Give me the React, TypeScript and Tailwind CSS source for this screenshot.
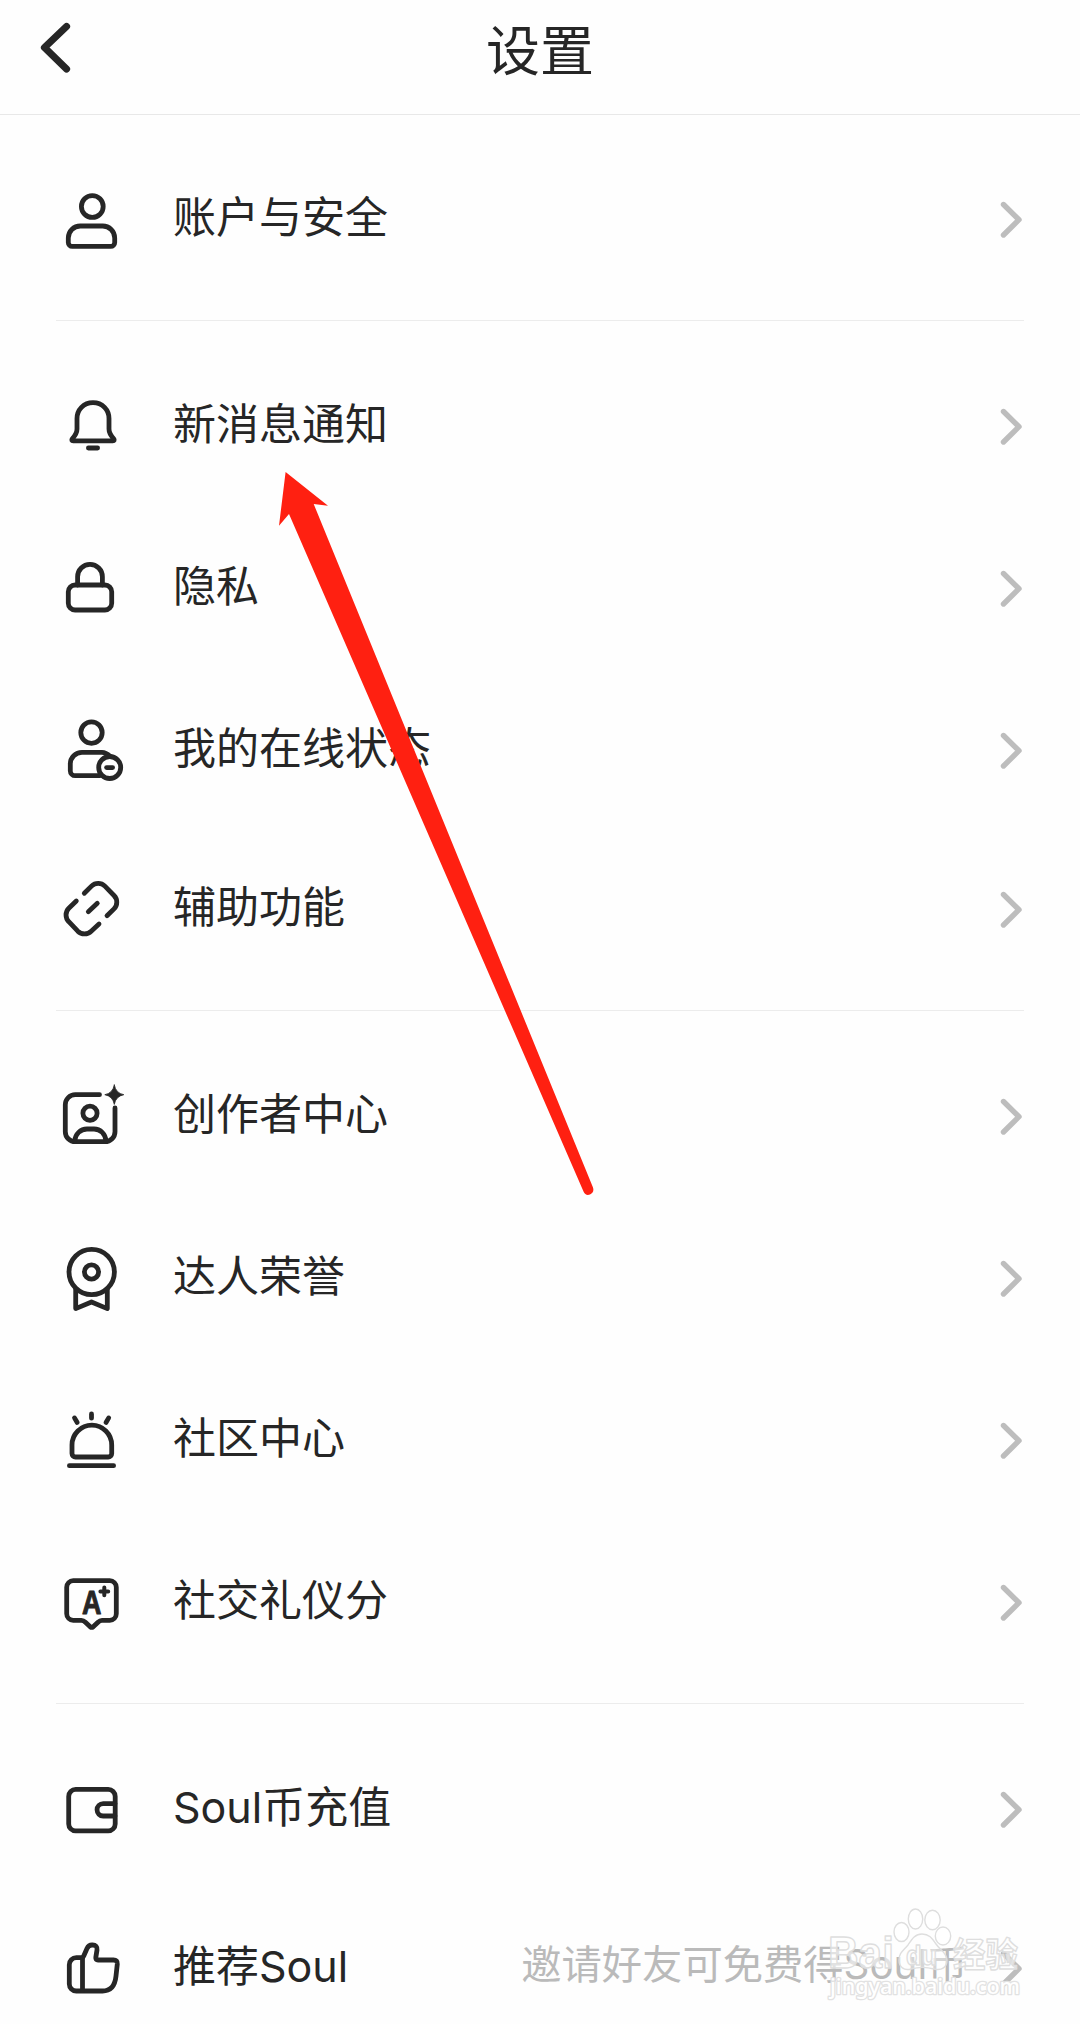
import type { ReactNode } from "react";

type Item = {
  label: string;
  icon: ReactNode;
  hint?: string;
  compact?: boolean;
};

function Icon({ children }: { children: ReactNode }) {
  return (
    <svg
      viewBox="0 0 72 72"
      className="size-[72px] shrink-0"
      fill="none"
      stroke="currentColor"
      strokeWidth={4.8}
      strokeLinecap="round"
      strokeLinejoin="round"
    >
      {children}
    </svg>
  );
}

const UserIcon = () => (
  <Icon>
    <circle cx="36.3" cy="22.5" r="10.9" />
    <path d="M24.3 42H46.7A12 12 0 0 1 58.7 54V58.4A4 4 0 0 1 54.7 62.4H16.3A4 4 0 0 1 12.3 58.4V54A12 12 0 0 1 24.3 42Z" />
  </Icon>
);

const BellIcon = () => (
  <Icon>
    <path d="M37 11.7C27.5 11.7 21 18.8 21 27.5V38C21 42 19 44.8 16.4 47.6C15.2 49 15.8 49.8 17.2 49.8H56.8C58.2 49.8 58.8 49 57.6 47.6C55 44.8 53 42 53 38V27.5C53 18.8 46.5 11.7 37 11.7Z" />
    <path d="M32.4 57H41.6" />
  </Icon>
);

const LockIcon = () => (
  <Icon>
    <rect x="12.3" y="32" width="43.4" height="25" rx="6.8" />
    <path d="M21.6 32V23.7A12.4 12.4 0 0 1 46.4 23.7V32" />
  </Icon>
);

const StatusIcon = () => (
  <Icon>
    <circle cx="35.5" cy="17.6" r="10.7" />
    <path d="M44 60.7H19.3A5 5 0 0 1 14.3 55.7V49A11.7 11.7 0 0 1 26 37.3H46Q50 37.3 54 41.2" />
    <circle cx="53.7" cy="52.5" r="11" />
    <path d="M50.6 52.6H56.6" />
  </Icon>
);

const LinkIcon = () => (
  <Icon>
    <path d="M28.3 19.3L35.5 12.1A9.5 9.5 0 0 1 48.9 12.1L58 21.5A9.5 9.5 0 0 1 58 34.9L51 41.7" />
    <path d="M20.3 27L12.8 34.3A9.5 9.5 0 0 0 12.8 47.7L21.8 57.2A9.5 9.5 0 0 0 35.2 57.2L43 50" />
    <path d="M32.3 37.7L41.3 29.3" />
  </Icon>
);

const CreatorIcon = () => (
  <Icon>
    <path d="M43.5 13.7H19.3A10 10 0 0 0 9.3 23.7V50.7A10 10 0 0 0 19.3 60.7H49A10 10 0 0 0 59 50.7V27" />
    <circle cx="34" cy="32.3" r="7.1" />
    <path d="M18.7 60C19.2 53 24.5 48 31 48H38C44.5 48 49.5 53 50 60" />
    <path
      d="M58.3 4Q59.8 12.2 67.8 13.7Q59.8 15.2 58.3 23.4Q56.8 15.2 48.8 13.7Q56.8 12.2 58.3 4Z"
      fill="currentColor"
      strokeWidth={0.8}
    />
  </Icon>
);

const MedalIcon = () => (
  <Icon>
    <circle cx="35.7" cy="29" r="22.7" />
    <circle cx="35.5" cy="29" r="7.1" />
    <path d="M19.7 46V65.6L35.5 59L51.3 65.6V46" />
  </Icon>
);

const SirenIcon = () => (
  <Icon>
    <path d="M35.5 9V13.2M18.5 12.9L21.2 17.5M52.7 12.9L50 17.5" />
    <path d="M16 40A19.8 19.8 0 0 1 55.7 40V48.5A3.5 3.5 0 0 1 52.2 52H19.5A3.5 3.5 0 0 1 16 48.5Z" />
    <path d="M13.4 60.7H57.6" />
  </Icon>
);

const ScoreIcon = () => (
  <Icon>
    <path d="M17.2 13.7H53.8A6.5 6.5 0 0 1 60.3 20.2V46.8A6.5 6.5 0 0 1 53.8 53.3H46C44 53.3 43.4 53.8 42 55.2L37.2 59.8Q35.7 61 34.2 59.8L29.4 55.2C28 53.8 27.4 53.3 25.4 53.3H17.2A6.5 6.5 0 0 1 10.7 46.8V20.2A6.5 6.5 0 0 1 17.2 13.7Z" />
    <text
      x="26"
      y="46.5"
      textLength="19.4"
      lengthAdjust="spacingAndGlyphs"
      className="font-['Liberation_Sans',sans-serif] text-[33px] font-bold"
      fill="currentColor"
      strokeWidth={1}
    >
      A
    </text>
    <path d="M44.4 24.4H52.2M48.3 20.5V28.3" strokeWidth={4} />
  </Icon>
);

const WalletIcon = () => (
  <Icon>
    <rect x="12.7" y="15.4" width="46.5" height="41.5" rx="7" />
    <path d="M59 29.7H47.2A6.15 6.15 0 0 0 47.2 42H59" />
  </Icon>
);

const ThumbIcon = () => (
  <Icon>
    <path d="M26.3 58H20.3A7 7 0 0 1 13.3 51V31.7A7 7 0 0 1 20.3 24.7H25.5Q27 24.7 27.6 23.2L31 15.5Q32.6 12 36 12H36.5Q41.5 12 41 17L39.8 24.5Q39.5 27 42 27H57.5Q61.6 27 61.3 31L60 43Q58.5 58 46.5 58Z" />
    <path d="M26.5 25V57.5" />
  </Icon>
);

const sections: { className: string; items: Item[] }[] = [
  {
    className: "pt-6 pb-[19px]",
    items: [{ label: "账户与安全", icon: <UserIcon /> }],
  },
  {
    className: "pt-[25px] pb-[22px]",
    items: [
      { label: "新消息通知", icon: <BellIcon /> },
      { label: "隐私", icon: <LockIcon /> },
      { label: "我的在线状态", icon: <StatusIcon /> },
      { label: "辅助功能", icon: <LinkIcon />, compact: true },
    ],
  },
  {
    className: "pt-[25px] pb-[19px]",
    items: [
      { label: "创作者中心", icon: <CreatorIcon /> },
      { label: "达人荣誉", icon: <MedalIcon /> },
      { label: "社区中心", icon: <SirenIcon /> },
      { label: "社交礼仪分", icon: <ScoreIcon /> },
    ],
  },
  {
    className: "pt-[25px]",
    items: [
      { label: "Soul币充值", icon: <WalletIcon /> },
      { label: "推荐Soul", icon: <ThumbIcon />, hint: "邀请好友可免费得Soul币", compact: true },
    ],
  },
];

function Row({ label, icon, hint, compact }: Item) {
  return (
    <li className={`flex items-center pr-[1.5px] ${compact ? "h-[156px]" : "h-[162px]"}`}>
      {icon}
      <span className="ml-[45px] pb-[5px] text-[43px] leading-none">{label}</span>
      <span className="ml-auto mr-[31px] pb-[8px] text-[40.3px] leading-none text-[#bababa]">{hint}</span>
      <svg
        viewBox="0 0 24 40"
        className="h-10 w-6 shrink-0 text-[#bdbdbd]"
        fill="none"
        stroke="currentColor"
        strokeWidth={5.4}
        strokeLinecap="round"
        strokeLinejoin="round"
      >
        <path d="M4.5 4.5L20 19.7L4.5 35" />
      </svg>
    </li>
  );
}

function PointerArrow() {
  return (
    <svg viewBox="0 0 320 730" className="absolute left-[276px] top-[468px] h-[730px] w-[320px] text-[#ff2011]">
      <path
        d="M9.6 4L52 37.7L37.7 36L317 719.5Q318.5 724.5 314 726.5Q309.5 728 307.5 723.5L13 46L3 57.7Z"
        fill="currentColor"
      />
    </svg>
  );
}

function Watermark() {
  return (
    <svg
      viewBox="0 0 220 125"
      className="absolute left-[820px] top-[1895px] h-[125px] w-[220px] font-['Liberation_Sans','Noto_Sans_CJK_SC',sans-serif] font-bold"
      fill="#ffffff"
      fillOpacity={0.6}
      stroke="#dedede"
      strokeWidth={1.4}
      strokeLinejoin="round"
    >
      <text x="8" y="73" fontSize="44" textLength="66" lengthAdjust="spacingAndGlyphs">
        Bai
      </text>
      <ellipse cx="81.5" cy="37" rx="7.5" ry="9.5" />
      <ellipse cx="95.5" cy="24" rx="7.2" ry="10" />
      <ellipse cx="112.5" cy="25" rx="7.7" ry="9.7" />
      <ellipse cx="123" cy="41" rx="7.7" ry="9" />
      <path
        d="M102 39C95 39 92 44 88 50C83 56 79 58 79 65C79 72 84 76 91 74C98 72 107 72 114 74C122 76 127 72 127 65C127 58 120 55 116 49C112 43 109 39 102 39Z"
        fillOpacity={0.4}
      />
      <text x="86" y="70" fontSize="27" textLength="31" lengthAdjust="spacingAndGlyphs">
        du
      </text>
      <text x="133" y="72" fontSize="34" textLength="65" lengthAdjust="spacingAndGlyphs">
        经验
      </text>
      {/* wide grey stroke behind a white one gives the haloed url */}
      <text
        x="10"
        y="99"
        fontSize="21"
        textLength="190"
        lengthAdjust="spacingAndGlyphs"
        className="font-['Noto_Sans',sans-serif] font-medium"
        stroke="#e2e2e2"
        strokeWidth={2.6}
        fillOpacity={1}
        paintOrder="stroke"
      >
        jingyan.baidu.com
      </text>
    </svg>
  );
}

export default function App() {
  return (
    <div className="relative h-[2024px] w-[1080px] overflow-hidden bg-[#fefefe] font-['Inter','Noto_Sans_CJK_SC',sans-serif] text-[#262626]">
      <header className="grid h-[115px] grid-cols-3 items-center border-b border-[#e8e8e8] pb-[18px]">
        <svg
          viewBox="0 0 36 56"
          className="ml-[38px] h-14 w-9"
          fill="none"
          stroke="currentColor"
          strokeWidth={7.2}
          strokeLinecap="round"
          strokeLinejoin="round"
        >
          <path d="M28.5 6.5L6.5 27.5L28.5 49" />
        </svg>
        <h1 className="pt-[7px] text-center text-[54px] leading-none">设置</h1>
      </header>

      <main className="px-14">
        {sections.map((section) => (
          <ul
            key={section.items[0].label}
            className={`border-b border-[#ececec] last:border-b-0 ${section.className}`}
          >
            {section.items.map((item) => (
              <Row key={item.label} {...item} />
            ))}
          </ul>
        ))}
      </main>

      <PointerArrow />
      <Watermark />
    </div>
  );
}
